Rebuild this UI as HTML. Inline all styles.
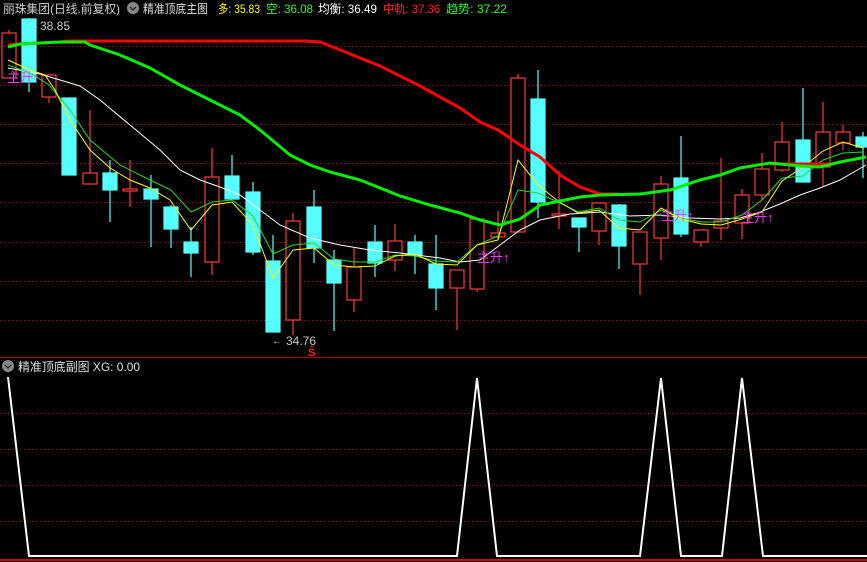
<!DOCTYPE html>
<html><head><meta charset="utf-8"><style>
html,body{margin:0;padding:0;background:#000;width:867px;height:562px;overflow:hidden}
svg{display:block}
text{font-family:"Liberation Sans","Noto Sans CJK SC",sans-serif}
</style></head><body>
<svg width="867" height="562" xmlns="http://www.w3.org/2000/svg">
<rect width="867" height="562" fill="#000"/>
<g stroke="#8a1a1a" stroke-width="1" stroke-dasharray="1,3">
<line x1="0" y1="46.5" x2="867" y2="46.5"/><line x1="0" y1="85.5" x2="867" y2="85.5"/><line x1="0" y1="124.5" x2="867" y2="124.5"/><line x1="0" y1="163.5" x2="867" y2="163.5"/><line x1="0" y1="202.5" x2="867" y2="202.5"/><line x1="0" y1="242.5" x2="867" y2="242.5"/><line x1="0" y1="281.5" x2="867" y2="281.5"/><line x1="0" y1="320.5" x2="867" y2="320.5"/>
<line x1="0" y1="413.5" x2="867" y2="413.5"/><line x1="0" y1="449.5" x2="867" y2="449.5"/><line x1="0" y1="485.5" x2="867" y2="485.5"/><line x1="0" y1="521.5" x2="867" y2="521.5"/>
</g>
<line x1="0" y1="357.5" x2="867" y2="357.5" stroke="#b00000"/>
<line x1="0" y1="560" x2="867" y2="560" stroke="#d00000" stroke-width="2"/>
<g stroke="#ff3a3a" stroke-width="1.2" fill="none">
<line x1="9" y1="30" x2="9" y2="33"/><rect x="2" y="33" width="14" height="45"/>
<line x1="49" y1="97" x2="49" y2="103"/><rect x="42" y="75" width="14" height="22"/>
<line x1="90" y1="110" x2="90" y2="184"/><rect x="83" y="173" width="14" height="11" fill="#000"/>
<line x1="130" y1="160" x2="130" y2="207"/><rect x="123" y="189" width="14" height="2" fill="#000"/>
<line x1="212" y1="148" x2="212" y2="275"/><rect x="205" y="177" width="14" height="85" fill="#000"/>
<line x1="293" y1="213" x2="293" y2="335"/><rect x="286" y="221" width="14" height="99" fill="#000"/>
<line x1="354" y1="248" x2="354" y2="312"/><rect x="347" y="267" width="14" height="33" fill="#000"/>
<line x1="395" y1="224" x2="395" y2="271"/><rect x="388" y="241" width="14" height="19" fill="#000"/>
<line x1="457" y1="288" x2="457" y2="330"/><rect x="450" y="270" width="14" height="18" fill="#000"/>
<line x1="477" y1="219" x2="477" y2="292"/><rect x="470" y="219" width="14" height="70" fill="#000"/>
<line x1="498" y1="211" x2="498" y2="240"/><rect x="491" y="233" width="14" height="4" fill="#000"/>
<line x1="518" y1="74" x2="518" y2="232"/><rect x="511" y="78" width="14" height="154" fill="#000"/>
<line x1="559" y1="171" x2="559" y2="229"/><rect x="552" y="214" width="14" height="2" fill="#000"/>
<line x1="599" y1="203" x2="599" y2="245"/><rect x="592" y="203" width="14" height="28" fill="#000"/>
<line x1="640" y1="264" x2="640" y2="295"/><rect x="633" y="232" width="14" height="32" fill="#000"/>
<line x1="661" y1="176" x2="661" y2="260"/><rect x="654" y="184" width="14" height="54" fill="#000"/>
<line x1="701" y1="242" x2="701" y2="247"/><rect x="694" y="230" width="14" height="12" fill="#000"/>
<line x1="721" y1="158" x2="721" y2="240"/><rect x="714" y="221" width="14" height="7" fill="#000"/>
<line x1="742" y1="189" x2="742" y2="239"/><rect x="735" y="195" width="14" height="28" fill="#000"/>
<line x1="762" y1="153" x2="762" y2="200"/><rect x="755" y="169" width="14" height="26" fill="#000"/>
<line x1="782" y1="122" x2="782" y2="172"/><rect x="775" y="142" width="14" height="28" fill="#000"/>
<line x1="823" y1="102" x2="823" y2="187"/><rect x="816" y="132" width="14" height="35" fill="#000"/>
<line x1="843" y1="125" x2="843" y2="150"/><rect x="836" y="132" width="14" height="11" fill="#000"/>
</g>
<g stroke="#55ffff" stroke-width="1.2" fill="#55ffff">
<line x1="29" y1="18" x2="29" y2="92"/><rect x="22" y="19" width="14" height="63"/>
<line x1="69" y1="98" x2="69" y2="175"/><rect x="62" y="98" width="14" height="77"/>
<line x1="110" y1="160" x2="110" y2="222"/><rect x="103" y="173" width="14" height="17"/>
<line x1="151" y1="175" x2="151" y2="247"/><rect x="144" y="189" width="14" height="10"/>
<line x1="171" y1="205" x2="171" y2="248"/><rect x="164" y="207" width="14" height="22"/>
<line x1="191" y1="227" x2="191" y2="277"/><rect x="184" y="242" width="14" height="11"/>
<line x1="232" y1="155" x2="232" y2="199"/><rect x="225" y="176" width="14" height="23"/>
<line x1="253" y1="182" x2="253" y2="255"/><rect x="246" y="192" width="14" height="60"/>
<line x1="273" y1="235" x2="273" y2="332"/><rect x="266" y="261" width="14" height="71"/>
<line x1="314" y1="190" x2="314" y2="263"/><rect x="307" y="207" width="14" height="41"/>
<line x1="334" y1="250" x2="334" y2="331"/><rect x="327" y="260" width="14" height="23"/>
<line x1="375" y1="225" x2="375" y2="277"/><rect x="368" y="242" width="14" height="21"/>
<line x1="415" y1="235" x2="415" y2="274"/><rect x="408" y="242" width="14" height="13"/>
<line x1="436" y1="235" x2="436" y2="310"/><rect x="429" y="264" width="14" height="24"/>
<line x1="538" y1="70" x2="538" y2="218"/><rect x="531" y="99" width="14" height="103"/>
<line x1="579" y1="218" x2="579" y2="252"/><rect x="572" y="218" width="14" height="9"/>
<line x1="619" y1="204" x2="619" y2="269"/><rect x="612" y="205" width="14" height="41"/>
<line x1="681" y1="136" x2="681" y2="237"/><rect x="674" y="178" width="14" height="56"/>
<line x1="803" y1="88" x2="803" y2="182"/><rect x="796" y="140" width="14" height="42"/>
<line x1="863" y1="132" x2="863" y2="178"/><rect x="856" y="137" width="14" height="10"/>
</g>
<polyline fill="none" stroke="#ffffff" stroke-width="1" points="8,68 40,74 80,86 100,100 130,125 160,150 180,170 200,180 220,187 240,195 260,210 280,225 310,238 340,245 370,250 400,253 440,258 460,262 480,260 500,245 520,230 540,220 570,214 600,212 630,216 660,215 690,218 720,219 740,218 760,212 780,204 800,195 820,188 840,180 866,165"/>
<polyline fill="none" stroke="#22dd22" stroke-width="1" points="8,65 30,73 49,85 70,110 90,140 120,165 150,180 171,190 191,212 212,202 232,200 253,216 273,254 293,245 314,243 334,259 354,262 375,262 395,255 415,256 436,261 457,262 477,245 498,236 518,190 538,193 558,202 578,212 599,208 619,220 640,222 661,210 681,218 701,222 721,222 742,215 762,200 782,178 803,176 823,160 843,153 863,152"/>
<polyline fill="none" stroke="#ffff00" stroke-width="1" points="8,60 30,70 45,75 55,90 70,120 90,150 110,168 130,180 150,188 170,200 191,230 212,205 232,202 253,225 273,278 293,250 314,248 334,265 354,267 375,266 395,256 415,254 436,264 457,265 477,245 498,240 518,160 538,185 558,201 578,213 599,210 619,228 640,230 661,208 681,219 701,224 721,225 742,219 762,212 782,181 803,167 823,151 843,142 863,148"/>
<polyline fill="none" stroke="#ff0000" stroke-width="3" points="8,45 20,44 60,42 70,41 305,41 320,42 340,50 380,66 420,86 460,108 480,122 498,130 520,145 540,157 560,175 580,187 600,194 620,194"/>
<polyline fill="none" stroke="#ff0000" stroke-width="3" points="770,164 830,164"/>
<polyline fill="none" stroke="#00ee00" stroke-width="3" points="8,47 20,44 40,43 60,42 85,42 90,45 120,55 150,68 180,85 210,100 240,115 260,130 290,155 310,165 330,172 360,180 400,196 430,205 460,213 480,220 500,225 520,219 540,205 560,201 580,197 600,195 640,194 670,190 700,180 720,175 740,168 770,163 800,166 820,167 840,162 866,157"/>
<g fill="#ff33ff" font-size="13">
<text x="7" y="82">主升↑</text><text x="477" y="262">主升↑</text><text x="661" y="220">主升↑</text><text x="741" y="222">主升↑</text>
</g>
<text x="40" y="30" fill="#c8c8c8" font-size="12">38.85</text>
<text x="30" y="29" fill="#c8c8c8" font-size="10">←</text>
<text x="286" y="345" fill="#c8c8c8" font-size="12">34.76</text>
<text x="272" y="344" fill="#c8c8c8" font-size="10">←</text>
<text x="308" y="356" fill="#ff2020" font-size="11" font-weight="bold">Ŝ</text>
<g font-size="12">
<text x="3" y="13" fill="#d0d0d0" textLength="117" lengthAdjust="spacingAndGlyphs">丽珠集团(日线.前复权)</text>
<circle cx="133" cy="8" r="6" fill="#888"/><path d="M130,7 l3,3 l3,-3" stroke="#222" stroke-width="1.3" fill="none"/>
<text x="143" y="13" fill="#e0e0e0" textLength="65" lengthAdjust="spacingAndGlyphs">精准顶底主图</text>
<text x="218" y="13" fill="#ffff00" textLength="42" lengthAdjust="spacingAndGlyphs">多: 35.83</text>
<text x="266" y="13" fill="#22ff22" textLength="47" lengthAdjust="spacingAndGlyphs">空: 36.08</text>
<text x="318" y="13" fill="#ffffff" textLength="59" lengthAdjust="spacingAndGlyphs">均衡: 36.49</text>
<text x="383" y="13" fill="#ff2020" textLength="57" lengthAdjust="spacingAndGlyphs">中軌: 37.36</text>
<text x="446" y="13" fill="#22ff22" textLength="61" lengthAdjust="spacingAndGlyphs">趋势: 37.22</text>
</g>
<g font-size="12">
<circle cx="8" cy="366" r="6" fill="#888"/><path d="M5,365 l3,3 l3,-3" stroke="#222" stroke-width="1.3" fill="none"/>
<text x="18" y="371" fill="#e0e0e0" textLength="122" lengthAdjust="spacingAndGlyphs">精准顶底副图 XG: 0.00</text>
</g>
<polyline fill="none" stroke="#ffffff" stroke-width="2" points="8,377 29,556 457,556 477,378 497,556 640,556 661,378 681,556 722,556 742,378 763,556 867,556"/>
</svg>
</body></html>
